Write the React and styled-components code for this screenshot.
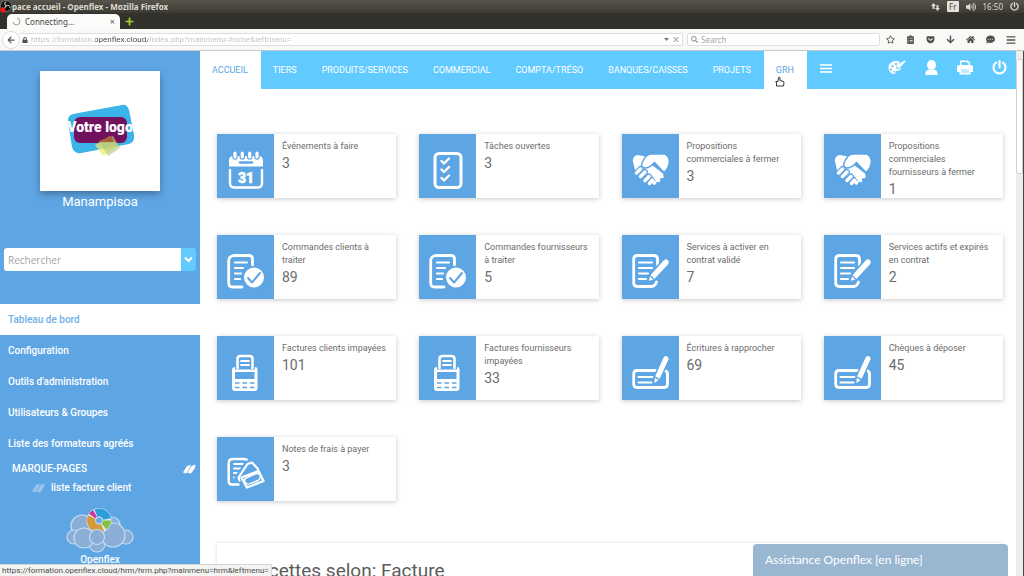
import styled, { createGlobalStyle, css } from 'styled-components'
import {
  FaRegStar, FaClipboardList, FaGetPocket, FaHome, FaCommentDots, FaBars,
  FaVolumeUp, FaArrowLeft, FaArrowDown, FaSearch, FaLock, FaPlus,
} from 'react-icons/fa'

const blue = '#5ea5e4'
const sky = '#61caff'

const GlobalStyle = createGlobalStyle`
  * { box-sizing: border-box; }
  body {
    margin: 0;
    background: #fff;
    font-family: Roboto, 'Liberation Sans', sans-serif;
    overflow: hidden;
  }
  a { color: inherit; text-decoration: none; }
  button { border: 0; padding: 0; background: none; color: inherit; font: inherit; }
  svg { display: block; flex-shrink: 0; }
`

const Window = styled.div`
  height: 100vh;
  display: flex;
  flex-direction: column;
`

/* ── Desktop bar ── */
const SystemBar = styled.header`
  height: 13px;
  flex-shrink: 0;
  display: flex;
  align-items: center;
  gap: 7px;
  padding-right: 5px;
  background: linear-gradient(#56544a, #3b3a34);
  color: #dfdbd2;
  font: 8px/12px 'Noto Sans', 'Open Sans', sans-serif;
`
const WindowTitle = styled.h1`
  flex: 1;
  margin: 0 0 0 -7px;
  font-size: 8px;
  font-weight: 700;
  line-height: 12px;
`
const Layout = styled.span`
  padding: 0 2px;
  border-radius: 1px;
  background: #e6e2da;
  color: #4a4840;
  line-height: 11px;
`

/* ── Browser chrome ── */
const TabStrip = styled.div`
  height: 16px;
  flex-shrink: 0;
  display: flex;
  align-items: center;
  gap: 5px;
  padding-left: 7px;
  background: #32312c;
`
const BrowserTab = styled.div`
  width: 113px;
  height: 15px;
  align-self: flex-end;
  display: flex;
  align-items: center;
  gap: 4px;
  padding: 0 5px;
  border-radius: 5px 5px 0 0;
  background: #fbfbfa;
  color: #444;
  font: 8px/15px 'Noto Sans', 'Open Sans', sans-serif;

  span { flex: 1; }
`
const CloseTab = styled.button`
  font-size: 9px;
  color: #555;
`
const NewTab = styled.button`
  color: #a9d42f;
`
const Toolbar = styled.div`
  height: 22px;
  flex-shrink: 0;
  display: flex;
  align-items: center;
  gap: 4px;
  padding: 0 8px 0 2px;
  background: #f9f9f8;
  border-bottom: 1px solid #c5c9cc;
  color: #51504c;
`
const BackButton = styled.button`
  width: 18px;
  height: 18px;
  display: grid;
  place-items: center;
  border: 1px solid #dcdcda;
  border-radius: 50%;
  background: #fff;
`
const field = css`
  height: 13px;
  display: flex;
  align-items: center;
  gap: 3px;
  background: #fff;
  border: 1px solid #dededc;
  border-radius: 2px;

  input {
    flex: 1;
    min-width: 0;
    padding: 0;
    border: 0;
    outline: 0;
    background-color: transparent;
    font: 8px/11px Roboto, 'Open Sans', sans-serif;
  }
`
const AddressField = styled.label`
  ${field}
  flex: 1;
  margin-left: -4px;
  padding: 0 3px 0 2px;
  border-left: 0;

  input {
    color: #c0c0c0;
    background-image: linear-gradient(90deg, #c0c0c0 64px, #444 64px, #444 117px, #c0c0c0 117px);
    background-clip: text;
    -webkit-text-fill-color: transparent;
  }
`
const SearchField = styled.label`
  ${field}
  width: 193px;
  padding: 0 3px;
  color: #999;

  input { font-family: 'Noto Sans', 'Open Sans', sans-serif; }
  input::placeholder { color: #a4a4a4; opacity: 1; }
`
const ToolButtons = styled.div`
  display: flex;
  align-items: center;
  gap: 11px;
  padding-left: 2px;
`

/* ── Page ── */
const Page = styled.div`
  flex: 1;
  min-height: 0;
  display: flex;
  border-right: 1px solid #45443f;
`
const Sidebar = styled.aside`
  width: 200px;
  flex-shrink: 0;
  display: flex;
  flex-direction: column;
  overflow: hidden;
  background: ${blue};
  color: #fff;
`
const Company = styled.div`
  display: flex;
  flex-direction: column;
  align-items: center;
  gap: 3px;
  padding-top: 20px;
  font-size: 13px;
  line-height: 16px;
`
const LogoCard = styled.div`
  width: 120px;
  height: 120px;
  display: grid;
  place-items: center;
  background: #fff;
  box-shadow: 0 3px 7px rgba(0, 0, 0, 0.3);
`
const SideSearch = styled.form`
  display: flex;
  height: 23px;
  margin: 38px 4px 33px;
  border-radius: 3px;
  overflow: hidden;

  input {
    flex: 1;
    min-width: 0;
    padding: 0 4px;
    border: 0;
    background: #fff;
    font: 10px/20px 'Open Sans', sans-serif;
  }
  input::placeholder { color: #a5a5a5; opacity: 1; }
  button {
    width: 15px;
    display: grid;
    place-items: center;
    background: ${sky};
  }
`
const SideMenu = styled.nav`
  display: flex;
  flex-direction: column;
`
const SideLink = styled.a`
  padding: 0 8px;
  font-size: 10px;
  font-weight: 500;
  line-height: 31px;
  color: ${p => (p.$active ? '#6fb0e8' : '#fff')};
  background: ${p => (p.$active ? '#fff' : 'transparent')};
`
const Bookmarks = styled.section`
  padding: 0 4px 0 12px;
  font-size: 10px;
  font-weight: 500;
`
const BookmarkHead = styled.h2`
  display: flex;
  justify-content: space-between;
  align-items: center;
  margin: 0;
  font-size: 10px;
  font-weight: 500;
  line-height: 19px;
`
const BookmarkLink = styled.a`
  display: flex;
  align-items: center;
  gap: 6px;
  padding-left: 20px;
  line-height: 19px;
  svg { opacity: 0.35; }
`
const Brand = styled.a`
  display: flex;
  flex-direction: column;
  align-items: center;
  padding-top: 10px;
  font-size: 10px;
  font-weight: 500;
  line-height: 14px;
`

const Main = styled.main`
  flex: 1;
  min-width: 0;
  display: flex;
  flex-direction: column;
  overflow: hidden;
`
const TopNav = styled.nav`
  height: 38px;
  flex-shrink: 0;
  display: flex;
  align-items: stretch;
  background: ${sky};
`
const TopLink = styled.a`
  position: relative;
  padding: 0 13px 0 12px;
  font-size: 9px;
  line-height: 38px;
  color: ${p => (p.$active ? '#5aa6e6' : '#fff')};
  background: ${p => (p.$active ? '#fff' : 'transparent')};
`
const HandCursor = styled.svg`
  position: absolute;
  left: 11px;
  top: 25px;
`
const MenuToggle = styled.button`
  margin-left: 13px;
  margin-bottom: 3px;
  color: #fff;
`
const TopActions = styled.div`
  display: flex;
  align-items: center;
  gap: 19px;
  margin-left: auto;
  padding: 0 9px 5px 0;
  color: #fff;
`
const Cards = styled.section`
  display: grid;
  grid-template-columns: repeat(4, 1fr);
  gap: 37px 23px;
  padding: 45px 13px 42px 17px;
`
const CardBox = styled.a`
  height: 64px;
  display: flex;
  background: #fff;
  box-shadow: 0 1px 5px rgba(0, 0, 0, 0.22);
`
const CardIcon = styled.div`
  width: 57px;
  flex-shrink: 0;
  padding: 17px 0 0 10px;
  background: ${blue};
`
const CardText = styled.div`
  min-width: 0;
  padding: 6px 6px 0 8px;
  color: #6c6c6c;
`
const CardLabel = styled.div`
  font-size: 9px;
  line-height: 13px;
`
const CardValue = styled.div`
  font-size: 14px;
  line-height: 21px;
`
const Panel = styled.section`
  flex: 1;
  margin: 0 13px 0 17px;
  padding: 15px 30px 0;
  background: #fff;
  box-shadow: 0 0 4px rgba(0, 0, 0, 0.16);

  h2 {
    margin: 0;
    font-size: 19px;
    font-weight: 400;
    line-height: 26px;
    color: #5c5c5c;
    white-space: nowrap;
  }
`
const ScrollTrack = styled.div`
  width: 7px;
  flex-shrink: 0;
  padding-top: 8px;
  background: #efedea;
`
const ScrollThumb = styled.div`
  height: 115px;
  border: 1px solid #d2cfca;
  border-radius: 2px;
  background: #fff;
`
const StatusUrl = styled.div`
  position: fixed;
  left: 0;
  bottom: 0;
  padding: 0 2px;
  border: 1px solid #d5d5d3;
  border-width: 1px 1px 0 0;
  border-radius: 0 2px 0 0;
  background: #f3f3f1;
  color: #4c4c4c;
  font: 8px/11px Roboto, 'Open Sans', sans-serif;
`
const Assistance = styled.button`
  position: fixed;
  right: 16px;
  bottom: 0;
  width: 255px;
  height: 32px;
  padding: 0 12px;
  border-radius: 4px 4px 0 0;
  background: #9ab7d1;
  color: #fff;
  font: 12px/32px Lato, sans-serif;
  text-align: left;
`

/* ── Card icons, all on a 38px grid ── */
const Glyph = ({ children }) => (
  <svg width="38" height="38" viewBox="0 0 38 38" fill="none" stroke="#fff" strokeWidth="2.4" strokeLinecap="round" strokeLinejoin="round">
    {children}
  </svg>
)

const icons = {
  calendar: (
    <Glyph>
      <path d="M2 15.500V10Q2 5 6 5H32Q36 5 36 10V15.500Z" fill="#fff" stroke="none" />
      <path d="M3 19V32Q3 36.500 7 36.500H31Q35 36.500 35 32V19" />
      <path d="M8 3V6M15.300 3V6M22.700 3V6M30 3V6" stroke={blue} strokeWidth="5.500" />
      <path d="M8 2V6M15.300 2V6M22.700 2V6M30 2V6" strokeWidth="3.200" />
      <path d="M13 11.500h12" stroke={blue} strokeWidth="2.400" />
      <text x="19" y="32" textAnchor="middle" fill="#fff" stroke="#fff" strokeWidth=".5" fontSize="14" fontWeight="900" fontFamily="Roboto, sans-serif">31</text>
    </Glyph>
  ),
  tasks: (
    <Glyph>
      <rect x="6" y="2.500" width="26" height="34" rx="4" strokeWidth="3" />
      <path d="M12.500 10l2.500 2.500 5-5M12.500 18.500l2.500 2.500 5-5M12.500 27l2.500 2.500 5-5" />
    </Glyph>
  ),
  hands: (
    <Glyph>
      <path d="M.7 9Q1.500 4.500 6 4L14 5.500 11 15 20 14 31 22.500Q32 26 29 27L22 33.500 8 20 3 19Z" fill="#fff" stroke="none" />
      <path d="M12 8Q15 3 19.500 3H33Q37.500 5.500 37.300 11Q37 17 32 21.500L22.500 11.500Q18 17 12.500 17Q8.500 15.500 10 12Z" fill="#fff" stroke={blue} strokeWidth="1.500" />
      <path d="M4.500 22l4-4M8.500 25.500l4.500-4.500M13 29.500l4-4M17.500 32.500l3-3.500" stroke={blue} strokeWidth="6" />
      <path d="M4.500 22l4-4M8.500 25.500l4.500-4.500M13 29.500l4-4M17.500 32.500l3-3.500" strokeWidth="3.500" />
      <path d="M22.500 32l-2-2M26.500 29.500l-3-3M30 25.500l-4-4" strokeWidth="3.500" />
    </Glyph>
  ),
  order: (
    <Glyph>
      <path d="M25.500 13V7Q25.500 3.500 22 3.500H6.500Q1.700 4.500 1.700 9V31Q1.700 35 5.500 35H15" strokeWidth="2.800" />
      <path d="M8 10.500h12M8 16h8M8 21.500h6M8 27h5" strokeWidth="2.200" />
      <circle cx="27" cy="25.500" r="11.500" fill={blue} stroke="none" />
      <circle cx="27" cy="25.500" r="10" fill="#fff" stroke="none" />
      <path d="M21 26l4 4.500 8-9.500" stroke={blue} strokeWidth="2" />
    </Glyph>
  ),
  contract: (
    <Glyph>
      <path d="M25.500 13V7Q25.500 3.500 22 3.500H5.500Q1.700 3.500 1.700 7V31Q1.700 34.500 5.500 34.500H20Q23.500 34 24.500 30" strokeWidth="2.800" />
      <path d="M7 10.500h13M7 16h13M7 21.500h9M7 27h7" strokeWidth="2.200" />
      <path d="M15.500 30l2-7L31 8Q34 5 36.500 7.500 39 10 36.500 13L22.500 28Z" fill="#fff" stroke={blue} strokeWidth="1.800" />
      <path d="M17.500 23l5 5" stroke={blue} strokeWidth="1.200" />
    </Glyph>
  ),
  terminal: (
    <Glyph>
      <path d="M10.500 15V6Q10.500 3 13.500 3H22.500Q25.500 3 25.500 6V15" strokeWidth="2.600" />
      <path d="M14 8h8M14 12h8" strokeWidth="1.800" />
      <path d="M5 17Q5 14 8 14V16.500H28V14Q30.500 14 30.500 17V35Q30.500 38 27.500 38H8Q5 38 5 35Z" fill="#fff" stroke="none" />
      <path d="M8 19h19.500v7H8Z" fill={blue} stroke="none" />
      <path d="M8 30h4.500M15.500 30h4.500M23 30h4.500M8 34.500h4.500M15.500 34.500h4.500M23 34.500h4.500" stroke={blue} strokeWidth="1.600" strokeLinecap="butt" />
    </Glyph>
  ),
  cheque: (
    <Glyph>
      <path d="M27 17.500H5Q1.700 17.500 1.700 21V31Q1.700 34.500 5 34.500H32Q35.500 34.500 35.500 31V21Q35.500 18.500 33 17.700" strokeWidth="2.800" />
      <path d="M6.500 24h14M6.500 29.500h13" strokeWidth="2.200" />
      <path d="M21.500 32l.5-8L31 4Q33 1 36 3 38 4.500 37 7L28 27Z" fill="#fff" stroke={blue} strokeWidth="1.600" />
      <path d="M22.500 24l5 2.500" stroke={blue} strokeWidth="1.400" />
    </Glyph>
  ),
  expense: (
    <Glyph>
      <path d="M20.500 7Q20 5 17 5H6Q1.700 5 1.700 9V27Q1.700 30.500 5 30.500H11.500" strokeWidth="2.500" />
      <path d="M7 10h9M7 14.500h7M7 19h4.500M7 23.500h2.500" strokeWidth="2" />
      <path d="M10.500 24L20.500 9.500 25 8.500 31 14.500" stroke={blue} strokeWidth="6" />
      <path d="M12.500 26.500L11.500 23.500 20.500 10 25 8.500 31 15" strokeWidth="2.200" />
      <path d="M14.500 23.500L31.500 17 36.500 27 20 33.500Z" fill={blue} strokeWidth="2.400" />
      <path d="M20 23.500L28 20Q32 18.500 33 21.500T31 26.500L23 29.700Q19.500 31 18 28T20 23.500Z" strokeWidth="1.400" />
    </Glyph>
  ),
}

const Tag = () => (
  <svg width="13" height="10" viewBox="0 0 13 10" fill="#fff" aria-hidden="true">
    <path d="M0 8.500L3.500 2.500 7.500.500 7.200 3 3.500 9.500ZM4.500 9L8.500 2 12.500.500 12 4 8 9.500Z" />
  </svg>
)

const CompanyLogo = () => (
  <svg width="72" height="54" viewBox="-2 0 72 54" role="img" aria-label="Votre logo">
    <path d="M7 10L56 1Q61 0 63 6L68 31Q69 38 63 40L15 49Q8 50 6 43L2 18Q1 12 7 10Z" fill="#3bb4e9" />
    <rect x="8" y="13" width="53" height="26" rx="6" fill="#72125f" />
    <path d="M29 41l15-9 8 9-15 11Z" fill="#f4ec63" opacity=".7" />
    <path d="M33 37l14-5 7 12-12 8Z" fill="#b6c77c" opacity=".65" />
    <path d="M31 38l14-6 3 6Z" fill="#a4492f" opacity=".8" />
    <text x="34" y="28" textAnchor="middle" fill="#fff" fontSize="14" fontWeight="900" fontFamily="Roboto, sans-serif">Votre logo</text>
  </svg>
)

const CloudLogo = () => (
  <svg width="68" height="46" viewBox="0 0 68 46" aria-hidden="true">
    <g fill="#8aaed6" stroke="#c5dcf3" strokeWidth="1.200">
      <circle cx="16" cy="19" r="11" />
      <circle cx="46" cy="18" r="8" />
      <circle cx="8" cy="30" r="7" />
      <circle cx="60" cy="30" r="7" />
      <circle cx="31" cy="37" r="8" />
      <circle cx="18" cy="31" r="10" />
      <circle cx="47" cy="28" r="12" />
    </g>
    <circle cx="33" cy="13.500" r="12.500" fill="#d8e9f8" />
    <g fill="none" strokeWidth="8">
      <path d="M30 6.200A8 8 0 0 1 41 12" stroke="#2b9fd8" />
      <path d="M41 13.500A8 8 0 0 1 38 19.500" stroke="#83c341" />
      <path d="M36.500 20.700A8 8 0 0 1 25.800 10" stroke="#d79a3b" />
      <path d="M26.300 9A8 8 0 0 1 29 6.500" stroke="#d0359c" />
    </g>
    <circle cx="33" cy="13.500" r="3.500" fill="#6aa9e0" stroke="#c5dcf3" />
    <circle cx="31" cy="30" r="7.500" fill="#8aaed6" stroke="#c5dcf3" strokeWidth="1.200" />
  </svg>
)

const Palette = () => (
  <svg width="18" height="15" viewBox="0 0 18 15" fill="currentColor" aria-hidden="true">
    <path fillRule="evenodd" d="M8 1C3.500 1 .5 4 .5 7.500S3 14 6 14c2 0 1.500-1.500 1.700-2.500C8 10 12.500 12 13 7.500L10.500 9 8 8.500 8 6.500 12 2.300Q10.500 1 8 1ZM4.500 5a1.200 1.200 0 1 0 .01 0ZM3 8.500a1.100 1.100 0 1 0 .01 0ZM8 2.800a1.100 1.100 0 1 0 .01 0ZM6 11a.9.9 0 1 0 .01 0Z" />
    <path d="M8.500 8l.7-3L16.500.500 18 1 12 7.500Z" />
  </svg>
)

const User = () => (
  <svg width="13" height="15" viewBox="0 0 13 15" fill="currentColor" aria-hidden="true">
    <ellipse cx="6.500" cy="5" rx="4.500" ry="5" />
    <path d="M.5 15v-2.500Q1 10 4 9.500q2.500 1.500 5 0 3 .5 3.500 3V15Z" />
  </svg>
)

const Printer = () => (
  <svg width="16" height="15" viewBox="0 0 16 15" fill="currentColor" aria-hidden="true">
    <path d="M3 6V1.500Q3 .500 4 .500H11L13 2.500V6H11.500V3H10V2H4.500V6Z" />
    <path fillRule="evenodd" d="M2 5H14Q16 5 16 7V12H13.500V14.500H2.500V12H0V7Q0 5 2 5ZM4 9.500V13H12V9.500Z" />
    <path d="M4 9.500H12V13H4Z" opacity=".6" />
  </svg>
)

const Power = ({ size = 15 }) => (
  <svg width={size} height={size} viewBox="0 0 15 15" fill="none" stroke="currentColor" strokeWidth="2.200" strokeLinecap="round" aria-hidden="true">
    <path d="M4 2.600A6 6 0 1 0 11 2.600M7.500 1V7.500" />
  </svg>
)

const topLinks = ['ACCUEIL', 'TIERS', 'PRODUITS/SERVICES', 'COMMERCIAL', 'COMPTA/TRÉSO', 'BANQUES/CAISSES', 'PROJETS', 'GRH']
const whiteTabs = ['ACCUEIL', 'GRH']

const sideLinks = ['Tableau de bord', 'Configuration', "Outils d'administration", 'Utilisateurs & Groupes', 'Liste des formateurs agréés']

const cards = [
  { icon: 'calendar', label: 'Événements à faire', value: 3 },
  { icon: 'tasks', label: 'Tâches ouvertes', value: 3 },
  { icon: 'hands', label: 'Propositions commerciales à fermer', value: 3 },
  { icon: 'hands', label: 'Propositions commerciales fournisseurs à fermer', value: 1 },
  { icon: 'order', label: 'Commandes clients à traiter', value: 89 },
  { icon: 'order', label: 'Commandes fournisseurs à traiter', value: 5 },
  { icon: 'contract', label: 'Services à activer en contrat validé', value: 7 },
  { icon: 'contract', label: 'Services actifs et expirés en contrat', value: 2 },
  { icon: 'terminal', label: 'Factures clients impayées', value: 101 },
  { icon: 'terminal', label: 'Factures fournisseurs impayées', value: 33 },
  { icon: 'cheque', label: 'Écritures à rapprocher', value: 69 },
  { icon: 'cheque', label: 'Chèques à déposer', value: 45 },
  { icon: 'expense', label: 'Notes de frais à payer', value: 3 },
]

function BrowserChrome() {
  return (
    <>
      <SystemBar>
        <svg width="12" height="13" viewBox="0 0 12 13" aria-hidden="true">
          <circle cx="6" cy="6" r="5.500" fill="#111" stroke="#888" strokeWidth=".7" />
          <path d="M6 1.500Q3 4 6 6Q10 4 10 8M6 6Q5 10 2 8" fill="none" stroke="#ddd" />
          <circle cx="3" cy="10" r="2.500" fill="#f11" />
        </svg>
        <WindowTitle>pace accueil - Openflex - Mozilla Firefox</WindowTitle>
        <svg width="9" height="8" viewBox="0 0 9 8" fill="currentColor" aria-hidden="true">
          <path d="M2.500 0L5 3H3.500V6H1.500V3H0ZM6.500 8L9 5H7.500V2H5.500V5H4Z" />
        </svg>
        <Layout>Fr</Layout>
        <FaVolumeUp size={10} />
        <span>16:50</span>
        <Power size={9} />
      </SystemBar>
      <TabStrip>
        <BrowserTab>
          <svg width="9" height="9" viewBox="0 0 9 9" fill="none" stroke="#999" aria-hidden="true">
            <path d="M5 1A3.500 3.500 0 1 1 1 5" />
          </svg>
          <span>Connecting…</span>
          <CloseTab aria-label="Close tab">×</CloseTab>
        </BrowserTab>
        <NewTab aria-label="New tab"><FaPlus size={9} /></NewTab>
      </TabStrip>
      <Toolbar>
        <BackButton aria-label="Back"><FaArrowLeft size={8} /></BackButton>
        <AddressField>
          <FaLock size={6} />
          <input aria-label="Address" defaultValue="https://formation.openflex.cloud/index.php?mainmenu=home&leftmenu=" />
          <svg width="15" height="7" viewBox="0 0 15 7" aria-hidden="true">
            <path d="M0 2h5L2.500 5Z" fill="#777" />
            <path d="M9.500 1l5 5M14.500 1l-5 5" stroke="#888" />
          </svg>
        </AddressField>
        <SearchField>
          <FaSearch size={7} />
          <input aria-label="Search" placeholder="Search" />
        </SearchField>
        <ToolButtons>
          <button aria-label="Bookmark"><FaRegStar size={9} /></button>
          <button aria-label="Library"><FaClipboardList size={9} /></button>
          <button aria-label="Pocket"><FaGetPocket size={9} /></button>
          <button aria-label="Downloads"><FaArrowDown size={9} /></button>
          <button aria-label="Home"><FaHome size={9} /></button>
          <button aria-label="Chat"><FaCommentDots size={9} /></button>
          <button aria-label="Menu"><FaBars size={10} /></button>
        </ToolButtons>
      </Toolbar>
    </>
  )
}

function SidePanel() {
  return (
    <Sidebar>
      <Company>
        <LogoCard><CompanyLogo /></LogoCard>
        <span>Manampisoa</span>
      </Company>
      <SideSearch>
        <input aria-label="Rechercher" placeholder="Rechercher" />
        <button type="button" aria-label="Options de recherche">
          <svg width="9" height="7" viewBox="0 0 9 7" fill="none" stroke="#fff" strokeWidth="2"><path d="M1 1.500L4.500 5 8 1.500" /></svg>
        </button>
      </SideSearch>
      <SideMenu>
        {sideLinks.map((label, i) => (
          <SideLink key={label} href="#" $active={i === 0}>{label}</SideLink>
        ))}
      </SideMenu>
      <Bookmarks>
        <BookmarkHead>MARQUE-PAGES <Tag /></BookmarkHead>
        <BookmarkLink href="#"><Tag />liste facture client</BookmarkLink>
      </Bookmarks>
      <Brand href="#">
        <CloudLogo />
        Openflex
      </Brand>
    </Sidebar>
  )
}

export default function App() {
  return (
    <Window>
      <GlobalStyle />
      <BrowserChrome />
      <Page>
        <SidePanel />
        <Main>
          <TopNav>
            {topLinks.map(label => (
              <TopLink key={label} href="#" $active={whiteTabs.includes(label)}>
                {label}
                {label === 'GRH' && (
                  <HandCursor width="10" height="11" viewBox="0 0 10 11" fill="#fff" stroke="#333" strokeWidth="1">
                    <path d="M1.500 10V7L.8 5.500 3 5.500 3.500 1.500Q4.500.500 5 2V4.500L8.500 5.500 9 7 8.500 10Z" />
                  </HandCursor>
                )}
              </TopLink>
            ))}
            <MenuToggle aria-label="Menu">
              <svg width="12" height="9" viewBox="0 0 12 9" stroke="#fff" strokeWidth="1.300"><path d="M0 1h12M0 4.500h12M0 8h12" /></svg>
            </MenuToggle>
            <TopActions>
              <button aria-label="Thème"><Palette /></button>
              <button aria-label="Utilisateur"><User /></button>
              <button aria-label="Imprimer"><Printer /></button>
              <button aria-label="Déconnexion"><Power /></button>
            </TopActions>
          </TopNav>
          <Cards>
            {cards.map(card => (
              <CardBox key={card.label} href="#">
                <CardIcon>{icons[card.icon]}</CardIcon>
                <CardText>
                  <CardLabel>{card.label}</CardLabel>
                  <CardValue>{card.value}</CardValue>
                </CardText>
              </CardBox>
            ))}
          </Cards>
          <Panel>
            <h2>Recettes selon: Facture</h2>
          </Panel>
        </Main>
        <ScrollTrack><ScrollThumb /></ScrollTrack>
      </Page>
      <StatusUrl>https://formation.openflex.cloud/hrm/hrm.php?mainmenu=hrm&amp;leftmenu=</StatusUrl>
      <Assistance>Assistance Openflex [en ligne]</Assistance>
    </Window>
  )
}
